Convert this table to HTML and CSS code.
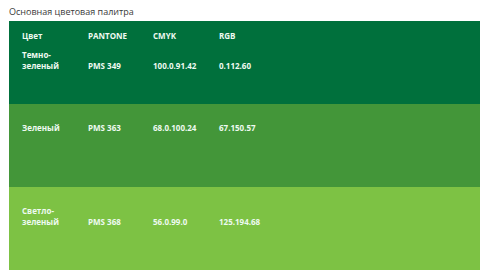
FILE: index.html
```html
<!DOCTYPE html>
<html lang="ru">
<head>
<meta charset="utf-8">
<link rel="stylesheet" href="styles.css">
</head>
<body>
<div class="page">
  <div class="title">Основная цветовая палитра</div>
  <div class="palette">
    <div class="band band-dark">
      <div class="row head">
        <div class="cell">Цвет</div>
        <div class="cell">PANTONE</div>
        <div class="cell">CMYK</div>
        <div class="cell">RGB</div>
      </div>
      <div class="row">
        <div class="cell">Темно-<br>зеленый</div>
        <div class="cell">PMS 349</div>
        <div class="cell">100.0.91.42</div>
        <div class="cell">0.112.60</div>
      </div>
    </div>
    <div class="band band-mid">
      <div class="row">
        <div class="cell">Зеленый</div>
        <div class="cell">PMS 363</div>
        <div class="cell">68.0.100.24</div>
        <div class="cell">67.150.57</div>
      </div>
    </div>
    <div class="band band-light">
      <div class="row">
        <div class="cell">Светло-<br>зеленый</div>
        <div class="cell">PMS 368</div>
        <div class="cell">56.0.99.0</div>
        <div class="cell">125.194.68</div>
      </div>
    </div>
  </div>
</div>
</body>
</html>
```
FILE: styles.css
```css
html, body {
  margin: 0;
  padding: 0;
  background: #ffffff;
}
.page {
  width: 480px;
  height: 270px;
  overflow: hidden;
  padding-left: 9px;
  box-sizing: border-box;
  font-family: "Open Sans", "Noto Sans", sans-serif;
}
.title {
  height: 21px;
  padding-top: 6px;
  box-sizing: border-box;
  font-size: 9px;
  line-height: 12px;
  color: #3a3a3a;
}
.palette {
  display: flex;
  flex-direction: column;
}
.band {
  height: 83px;
  box-sizing: border-box;
  padding-left: 13px;
  padding-top: 17.5px;
  display: flex;
  flex-direction: column;
  row-gap: 8.5px;
  color: #eefaf1;
  font-weight: 700;
  font-size: 8px;
  line-height: 11px;
}
.band-dark {
  background: #00703c;
  padding-top: 8.5px;
}
.band-mid {
  background: #439639;
}
.band-light {
  background: #7dc244;
  height: 84px;
}
.row {
  display: grid;
  grid-template-columns: 66px 65px 66px 1fr;
  align-items: end;
}
.cell {
  white-space: nowrap;
}
```
